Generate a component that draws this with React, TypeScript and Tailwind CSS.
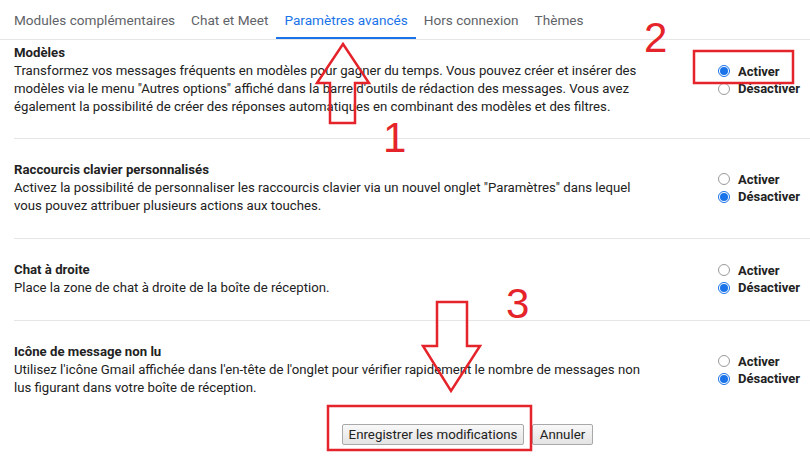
import React from 'react';

const tabs = ['Modules complémentaires', 'Chat et Meet', 'Paramètres avancés', 'Hors connexion', 'Thèmes'];

type Setting = {
    title: string;
    lines: string[];
    on: boolean;
};

const settings: Setting[] = [
    {
        title: 'Modèles',
        lines: [
            'Transformez vos messages fréquents en modèles pour gagner du temps. Vous pouvez créer et insérer des',
            'modèles via le menu "Autres options" affiché dans la barre d\'outils de rédaction des messages. Vous avez',
            'également la possibilité de créer des réponses automatiques en combinant des modèles et des filtres.',
        ],
        on: true,
    },
    {
        title: 'Raccourcis clavier personnalisés',
        lines: [
            'Activez la possibilité de personnaliser les raccourcis clavier via un nouvel onglet "Paramètres" dans lequel',
            'vous pouvez attribuer plusieurs actions aux touches.',
        ],
        on: false,
    },
    {
        title: 'Chat à droite',
        lines: ['Place la zone de chat à droite de la boîte de réception.'],
        on: false,
    },
    {
        title: 'Icône de message non lu',
        lines: [
            "Utilisez l'icône Gmail affichée dans l'en-tête de l'onglet pour vérifier rapidement le nombre de messages non",
            'lus figurant dans votre boîte de réception.',
        ],
        on: false,
    },
];

function Radio({ checked, label }: { checked: boolean; label: string }) {
    return (
        <div className="flex items-center h-[17.5px]">
            {checked ? (
                <span className="w-[12px] h-[12px] rounded-full border border-[#1a73e8] flex items-center justify-center">
                    <span className="w-[8px] h-[8px] rounded-full bg-[#1a73e8]" />
                </span>
            ) : (
                <span className="w-[12px] h-[12px] rounded-full border border-[#9a9a9a] bg-white" />
            )}
            <span className="ml-[8px] font-bold text-[13px] text-[#222]">{label}</span>
        </div>
    );
}

function SettingRow({ s, first, last }: { s: Setting; first: boolean; last: boolean }) {
    let pad = 'pt-[22px] pb-[23px] border-b border-[#e6e6e6]';
    if (first) pad = 'pt-[4px] pb-[22px] border-b border-[#e6e6e6]';
    if (last) pad = 'pt-[22px]';
    return (
        <div className={`flex items-center ${pad}`}>
            <div className="w-[704px] text-[13.2px] leading-[18px] text-[#222]">
                <div className="font-bold">{s.title}</div>
                {s.lines.map((l) => (
                    <div key={l} className="whitespace-nowrap">
                        {l}
                    </div>
                ))}
            </div>
            <div className="flex flex-col">
                <Radio checked={s.on} label="Activer" />
                <Radio checked={!s.on} label="Désactiver" />
            </div>
        </div>
    );
}

export default function App() {
    return (
        <div
            className="relative w-[810px] h-[460px] overflow-hidden bg-white"
            style={{ fontFamily: 'Roboto, "Liberation Sans", Arial, sans-serif' }}
        >
            <div className="flex pl-[6px] h-[40px] border-b border-[#e6e6e6]">
                {tabs.map((t, i) => (
                    <div
                        key={t}
                        className={`px-2 flex items-center text-[13.6px] ${
                            i === 2 ? 'text-[#1a73e8] border-b-2 border-[#1a73e8] pt-[3px]' : 'text-[#5f6368] pt-[1px]'
                        }`}
                    >
                        {t}
                    </div>
                ))}
            </div>

            <div className="ml-[14px]">
                {settings.map((s, i) => (
                    <SettingRow key={s.title} s={s} first={i === 0} last={i === settings.length - 1} />
                ))}
            </div>

            <div className="flex gap-[8px] pl-[342px] mt-[27px]">
                <button className="h-[21px] w-[182px] text-[13.3px] text-[#222] border border-[#a9a9a9] rounded-[2px] bg-gradient-to-b from-[#f8f8f8] to-[#e4e4e4]">
                    Enregistrer les modifications
                </button>
                <button className="h-[21px] w-[61px] text-[13.3px] text-[#222] border border-[#a9a9a9] rounded-[2px] bg-gradient-to-b from-[#f8f8f8] to-[#e4e4e4]">
                    Annuler
                </button>
            </div>

            {/* annotations */}
            <svg className="absolute inset-0 pointer-events-none" width="810" height="460">
                <g fill="none" stroke="#e5232a" strokeWidth="2.5" strokeLinejoin="miter">
                    <polygon points="343,44 369,83 355,83 355,123 330,123 330,83 317,83" />
                    <polygon points="437,302 467,302 467,346 480,346 451,391 423,346 437,346" />
                    <rect x="694" y="51" width="99" height="32" />
                    <rect x="328" y="406" width="203" height="44" />
                </g>
            </svg>
            <span
                className="absolute left-[383px] top-[117px] text-[42px] leading-none text-[#e5232a]"
                style={{ fontFamily: '"Liberation Sans", Arial, sans-serif' }}
            >
                1
            </span>
            <span
                className="absolute left-[644px] top-[17px] text-[42px] leading-none text-[#e5232a]"
                style={{ fontFamily: '"Liberation Sans", Arial, sans-serif' }}
            >
                2
            </span>
            <span
                className="absolute left-[506px] top-[283px] text-[42px] leading-none text-[#e5232a]"
                style={{ fontFamily: '"Liberation Sans", Arial, sans-serif' }}
            >
                3
            </span>
        </div>
    );
}
